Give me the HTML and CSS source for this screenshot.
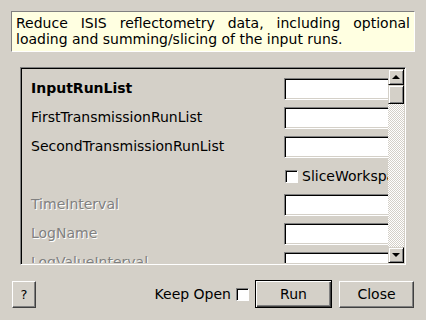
FILE: index.html
```html
<!DOCTYPE html>
<html lang="en">
<head>
    <meta charset="utf-8" />
    <title>ReflectometryReductionOneAuto</title>
    <link rel="stylesheet" href="styles.css">
</head>
<body>
    <div class="dialog">
        <div class="description">Reduce ISIS reflectometry data, including optional loading and summing/slicing of the input runs.</div>

        <div class="frame">
            <div class="props">
                <div class="row">
                    <span class="label mandatory">InputRunList</span>
                    <span class="field"></span>
                </div>
                <div class="row">
                    <span class="label">FirstTransmissionRunList</span>
                    <span class="field"></span>
                </div>
                <div class="row">
                    <span class="label">SecondTransmissionRunList</span>
                    <span class="field"></span>
                </div>
                <div class="row">
                    <span class="label"></span>
                    <span class="check-cell"><span class="check"></span>SliceWorkspace</span>
                </div>
                <div class="row">
                    <span class="label disabled">TimeInterval</span>
                    <span class="field"></span>
                </div>
                <div class="row">
                    <span class="label disabled">LogName</span>
                    <span class="field"></span>
                </div>
                <div class="row">
                    <span class="label disabled">LogValueInterval</span>
                    <span class="field"></span>
                </div>
            </div>
            <div class="scrollbar">
                <div class="sb-btn"><span class="arrow up"></span></div>
                <div class="sb-thumb"></div>
                <div class="sb-track"></div>
                <div class="sb-btn"><span class="arrow down"></span></div>
            </div>
        </div>

        <div class="footer">
            <button class="btn help">?</button>
            <span class="spacer"></span>
            <span class="keep-open">Keep Open<span class="check"></span></span>
            <button class="btn run">Run</button>
            <button class="btn close">Close</button>
        </div>
    </div>
</body>
</html>
```

FILE: styles.css
```css
body {
    margin: 0;
    padding: 0;
    background-color: #d4d0c8;
    font-family: "DejaVu Sans", sans-serif;
    font-size: 14px;
    color: #000;
}
.dialog {
    width: 426px;
    height: 320px;
    display: flex;
    flex-direction: column;
}
.description {
    margin: 11px 11px 0 11px;
    padding: 3px 4px 4px 4px;
    line-height: 16px;
    background-color: #ffffe1;
    border: 1px solid;
    border-color: #808080 #fff #fff #808080;
    text-align: justify;
}
.frame {
    margin: 15px 20px 0 20px;
    height: 194px;
    border: 1px solid;
    border-color: #808080 #fff #fff #808080;
    box-shadow: inset 1px 1px 0 #000;
    padding: 1px;
    display: flex;
}
.props {
    flex: 1;
    overflow: hidden;
    padding: 9px 0 0 9px;
}
.row {
    display: flex;
    align-items: center;
    height: 22px;
    margin-bottom: 7px;
}
.label {
    width: 253px;
    flex-shrink: 0;
    white-space: nowrap;
    margin-top: -2px;
}
.label.mandatory {
    font-weight: bold;
}
.label.disabled {
    color: #808080;
    text-shadow: 1px 1px 0 #fff;
}
.field {
    flex-shrink: 0;
    width: 130px;
    height: 22px;
    box-sizing: border-box;
    background-color: #fff;
    border: 1px solid;
    border-color: #808080 #fff #fff #808080;
    box-shadow: inset 1px 1px 0 #000, inset -1px -1px 0 #d4d0c8;
}
.check-cell {
    display: flex;
    align-items: center;
    white-space: nowrap;
    padding-left: 1px;
}
.check {
    display: inline-block;
    width: 13px;
    height: 13px;
    box-sizing: border-box;
    background-color: #fff;
    border: 1px solid;
    border-color: #808080 #fff #fff #808080;
    box-shadow: inset 1px 1px 0 #000;
    margin-right: 4px;
}
.scrollbar {
    width: 16px;
    display: flex;
    flex-direction: column;
}
.sb-btn,
.sb-thumb {
    box-sizing: border-box;
    background-color: #d4d0c8;
    border: 1px solid;
    border-color: #d4d0c8 #000 #000 #d4d0c8;
    box-shadow: inset 1px 1px 0 #fff, inset -1px -1px 0 #808080;
    display: flex;
    justify-content: center;
    align-items: center;
}
.sb-btn {
    height: 16px;
}
.sb-thumb {
    height: 19px;
}
.sb-track {
    flex: 1;
    background-color: #d4d0c8;
    background-image: repeating-conic-gradient(#fff 0 25%, #d4d0c8 0 50%);
    background-size: 2px 2px;
}
.arrow {
    width: 0;
    height: 0;
    border-left: 4px solid transparent;
    border-right: 4px solid transparent;
}
.arrow.up {
    border-bottom: 4px solid #000;
}
.arrow.down {
    border-top: 4px solid #000;
}
.footer {
    display: flex;
    align-items: center;
    margin: 15px 12px 0 12px;
}
.spacer {
    flex: 1;
}
.btn {
    font-family: "DejaVu Sans", sans-serif;
    font-size: 14px;
    color: #000;
    height: 27px;
    background-color: #d4d0c8;
    border: 1px solid;
    border-color: #fff #404040 #404040 #fff;
    box-shadow: inset -1px -1px 0 #808080;
    padding: 0;
}
.btn.help {
    width: 24px;
    font-size: 13px;
}
.keep-open {
    display: flex;
    align-items: center;
    margin-right: 6px;
}
.keep-open .check {
    margin-left: 5px;
    margin-right: 0;
}
.btn.run {
    width: 77px;
    height: 28px;
    border: 1px solid #000;
    box-shadow: inset 1px 1px 0 #fff, inset -1px -1px 0 #404040, inset -2px -2px 0 #808080;
}
.btn.close {
    width: 75px;
    margin-left: 7px;
}
```
